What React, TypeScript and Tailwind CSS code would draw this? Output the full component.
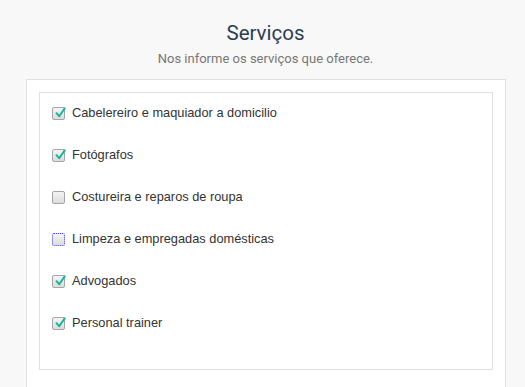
import React from 'react';

const services = [
  { label: 'Cabelereiro e maquiador a domicilio', checked: true },
  { label: 'Fotógrafos', checked: true },
  { label: 'Costureira e reparos de roupa', checked: false },
  { label: 'Limpeza e empregadas domésticas', checked: false, focused: true },
  { label: 'Advogados', checked: true },
  { label: 'Personal trainer', checked: true },
];

function Box({ checked, focused }: { checked: boolean; focused?: boolean }) {
  return (
    <span
      className={
        'relative flex h-[13px] w-[13px] shrink-0 items-center justify-center rounded-[2px] border bg-gradient-to-b from-[#f4f4f4] to-[#dcdcdc] ' +
        (focused ? 'border-dotted border-[#3b3bf0]' : 'border-[#a5a5a5]')
      }
    >
      {checked && (
        <svg viewBox="0 0 13 13" className="absolute left-[1px] top-[-2px] h-[13px] w-[13px]">
          <path d="M2.5 7.2 L5.2 10.2 L10.8 2.2" fill="none" stroke="#17b39b" strokeWidth="2" strokeLinecap="round" strokeLinejoin="round" />
        </svg>
      )}
    </span>
  );
}

export default function App() {
  return (
    <div className="min-h-[387px] bg-[#f8f8f8]">
      <div className="pl-[6px] pt-[18px] text-center">
        <h2 className="font-['Roboto',sans-serif] text-[20.5px] leading-[30px] text-[#2c3e50]">Serviços</h2>
        <p className="mt-[1px] font-['Roboto',sans-serif] text-[13px] leading-[20px] text-[#777]">
          Nos informe os serviços que oferece.
        </p>
      </div>
      <div className="mx-[26px] mt-[10px] h-[308px] w-[480px] border border-b-0 border-[#e0e0e0] bg-white px-[12px] pt-[12px]">
        <ul className="-mt-0 h-[278px] border border-[#e0e0e0] pl-[12px]">
          {services.map((s, i) => (
            <li key={s.label} className={'flex h-[42px] items-center gap-[7px] ' + (i === 0 ? '-mt-[1px]' : '')}>
              <Box checked={s.checked} focused={s.focused} />
              <span className="font-['Liberation_Sans',Arial,sans-serif] text-[12.8px] text-[#333]">{s.label}</span>
            </li>
          ))}
        </ul>
      </div>
    </div>
  );
}
